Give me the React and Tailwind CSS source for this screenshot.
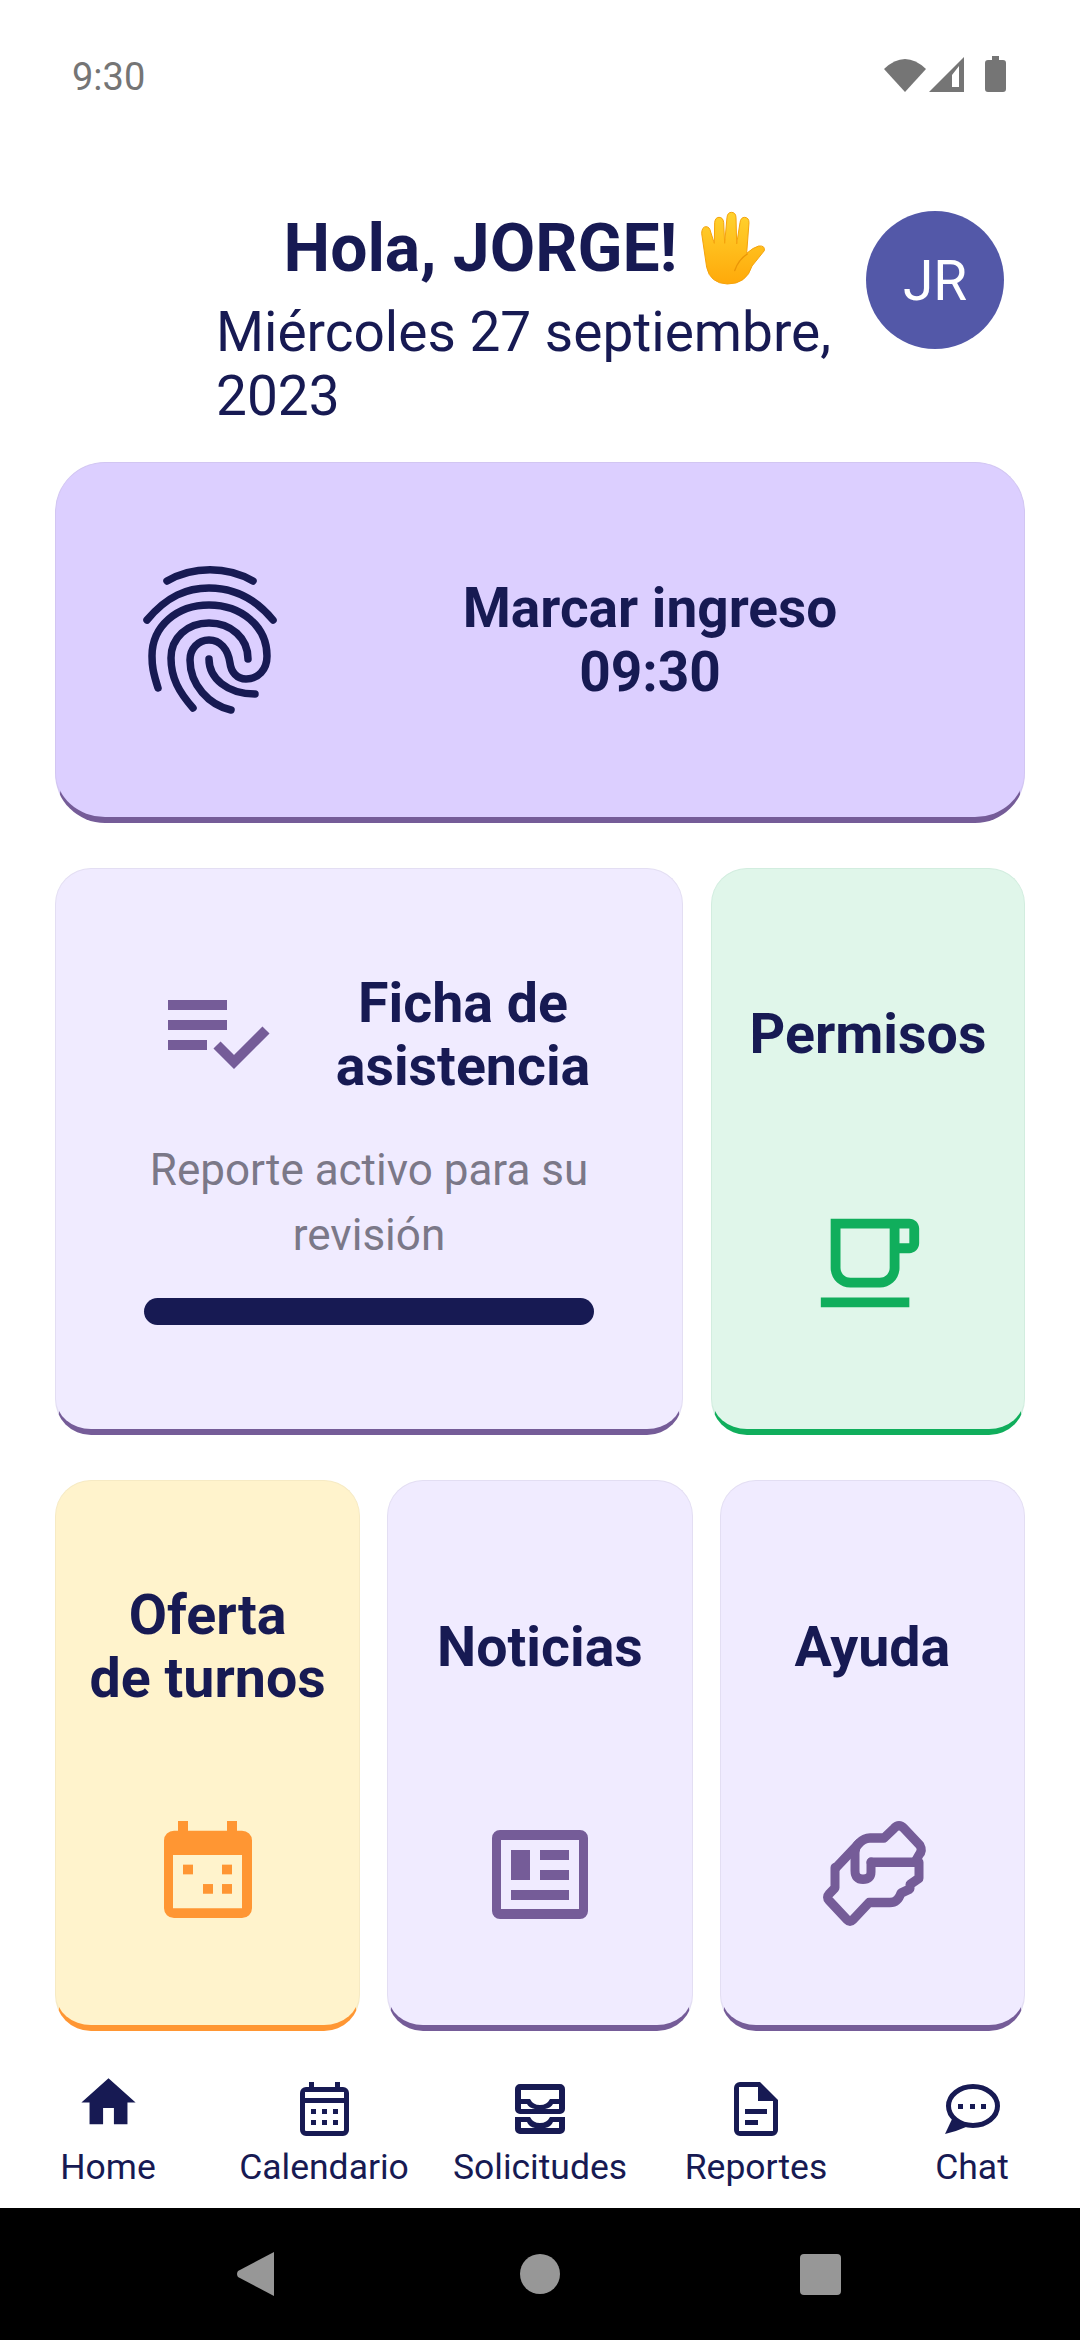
import { MdHome, MdOutlineLocalCafe } from "react-icons/md";

const navy = "#171a53";
const purple = "#755c98";

function HandEmoji() {
  return (
    <svg viewBox="0 0 270 270" className="w-[90px] h-[90px] shrink-0 -my-[1px]">
      <defs>
        <linearGradient id="hand" x1="0" y1="0" x2="0" y2="1">
          <stop offset="0" stopColor="#ffd22e" />
          <stop offset="1" stopColor="#ffa90a" />
        </linearGradient>
      </defs>
      <path
        d="M50 190 L35 88 Q36 68 48 68 Q59 68 62 84 L73 118 L74 55 Q76 40 87 40 Q99 40 101 55 L104 118 L111 40 Q113 25 124 25 Q137 25 138 40 L140 120 L150 56 Q152 40 164 40 Q177 41 177 56 L170 148 Q190 130 206 126 Q226 124 223 140 L186 186 Q170 240 112 240 Q60 238 50 190 Z"
        fill="url(#hand)"
        stroke="#f5a30c"
        strokeWidth="3"
        strokeLinejoin="round"
      />
      <path d="M172 150 Q146 166 134 200" fill="none" stroke="#eb9607" strokeWidth="4" strokeLinecap="round" />
    </svg>
  );
}

function Fingerprint() {
  return (
    <svg viewBox="0 0 170 170" className="w-[170px] h-[170px]" fill="none" stroke={navy} strokeWidth="7.5" strokeLinecap="round">
      <path d="M46 31 C72 16 106 16 132 31" />
      <path d="M26 70 C46 46 66 38 88 38 C112 38 134 48 152 70" />
      <path d="M37 138 C32 122 31 116 31 106 C31 76 56 55 88 55 C120 55 146 76 146 106 C146 120 137 129 125 129 C116 129 110 122 109 113 C107 99 99 90 88 90 C77 90 69 99 69 110 C69 135 88 155 110 160" />
      <path d="M72 158 C58 142 50 128 50 108 C50 88 66 73 88 73 C110 73 127 88 127 109" />
      <path d="M88 109 C88 128 106 144 134 144" />
    </svg>
  );
}

function ChecklistIcon() {
  return (
    <svg viewBox="0 0 102 70" className="w-[102px] h-[70px] shrink-0" fill={purple}>
      <rect x="0" y="0" width="59" height="10" />
      <rect x="0" y="20" width="59" height="10" />
      <rect x="0" y="40" width="39" height="10" />
      <path d="M49 45 L66 62 L98 30" fill="none" stroke={purple} strokeWidth="10" />
    </svg>
  );
}

function OrangeCalendar() {
  return (
    <svg viewBox="0 0 88 100" preserveAspectRatio="none" className="w-[88px] h-[97px] mb-[10px]">
      <path
        fillRule="evenodd"
        fill="#ff9633"
        d="M14 0h10v10h39V0h10v10h5a10 10 0 0 1 10 10v70a10 10 0 0 1-10 10H10A10 10 0 0 1 0 90V20a10 10 0 0 1 10-10h4zM9 35v55h69V35z"
      />
      <rect x="19" y="45" width="10" height="10" fill="#ff9633" />
      <rect x="58" y="45" width="10" height="10" fill="#ff9633" />
      <rect x="39" y="65" width="10" height="10" fill="#ff9633" />
      <rect x="58" y="65" width="10" height="10" fill="#ff9633" />
    </svg>
  );
}

function NewsIcon() {
  return (
    <svg viewBox="0 0 96 89" className="w-[96px] h-[89px]">
      <path
        fillRule="evenodd"
        fill={purple}
        d="M8 0h80a8 8 0 0 1 8 8v73a8 8 0 0 1-8 8H8a8 8 0 0 1-8-8V8a8 8 0 0 1 8-8zM9 10v69h78V10z"
      />
      <rect x="19" y="20" width="19" height="30" fill={purple} />
      <rect x="48" y="20" width="29" height="10" fill={purple} />
      <rect x="48" y="40" width="29" height="10" fill={purple} />
      <rect x="19" y="60" width="58" height="10" fill={purple} />
    </svg>
  );
}

function HandshakeIcon() {
  return (
    <svg viewBox="0 0 180 170" preserveAspectRatio="none" className="w-[180px] h-[180px] -my-[40px]" fill="none" stroke={purple} strokeWidth="9" strokeLinejoin="round" strokeLinecap="round">
      <path d="M54 79 L77 56 Q82 51 88 51 H102 L112 42 Q117 37 122 42 L138 58 Q141 63 137 67 L134 72" />
      <path d="M89 74 H137 V89 L128 95 V99 L119 103 Q116 112 108 112 H87 L71 128 Q68 131 65 128 L47 110 Q44 107 47 104 L53 98 V79" />
      <path d="M89 74 V83 Q89 90 81 90 Q73 90 73 82 V65 Q73 59 77 56" />
    </svg>
  );
}

function NavCalendar() {
  return (
    <svg viewBox="0 0 49 54" className="w-[49px] h-[54px]" fill={navy}>
      <path
        fillRule="evenodd"
        d="M9 0h5v5h21V0h5v5h3a6 6 0 0 1 6 6v37a6 6 0 0 1-6 6H6a6 6 0 0 1-6-6V11a6 6 0 0 1 6-6h3zM5 21v27a1 1 0 0 0 1 1h37a1 1 0 0 0 1-1V21zM5 10v6h39v-6z"
      />
      <rect x="11" y="27" width="5" height="5" />
      <rect x="22" y="27" width="5" height="5" />
      <rect x="33" y="27" width="5" height="5" />
      <rect x="11" y="38" width="5" height="5" />
      <rect x="22" y="38" width="5" height="5" />
      <rect x="33" y="38" width="5" height="5" />
    </svg>
  );
}

function NavInbox() {
  return (
    <svg viewBox="0 0 50 50" className="w-[50px] h-[50px]" fill={navy}>
      <path
        fillRule="evenodd"
        d="M5 0H45a5 5 0 0 1 5 5V25a5 5 0 0 1-5 5H5a5 5 0 0 1-5-5V5a5 5 0 0 1 5-5zM6 6V15H15Q18 21 25 21Q32 21 35 15H44V6zM6 20V25H20Q14 24 12 20zM44 20H38Q36 24 30 25H44z"
      />
      <path
        fillRule="evenodd"
        d="M0 33H15Q18 39 25 39Q32 39 35 33H50V45a5 5 0 0 1-5 5H5a5 5 0 0 1-5-5zM6 38V44H20Q14 43 12 38zM44 38H38Q36 43 30 44H44z"
      />
    </svg>
  );
}

function NavDoc() {
  return (
    <svg viewBox="0 0 44 54" className="w-[44px] h-[54px]" fill={navy}>
      <path
        fillRule="evenodd"
        d="M6 0h20l18 18v30a6 6 0 0 1-6 6H6a6 6 0 0 1-6-6V6a6 6 0 0 1 6-6zM5 5v44h34V19H24V5z"
      />
      <rect x="11" y="27" width="22" height="5" />
      <rect x="11" y="38" width="13" height="5" />
    </svg>
  );
}

function NavChat() {
  return (
    <svg viewBox="0 0 55 50" className="w-[55px] h-[50px]">
      <ellipse cx="28" cy="22" rx="24.5" ry="19.5" fill="none" stroke={navy} strokeWidth="5" />
      <path d="M0 50 L8 33 L21 43 Q10 48 0 50 Z" fill={navy} />
      <rect x="13" y="20" width="5" height="5" fill={navy} />
      <rect x="25" y="20" width="5" height="5" fill={navy} />
      <rect x="36" y="20" width="5" height="5" fill={navy} />
    </svg>
  );
}

const navItems = [
  { label: "Home", icon: <MdHome className="w-[65px] h-[65px] -mt-[12px] mb-[2px]" color={navy} /> },
  { label: "Calendario", icon: <NavCalendar /> },
  { label: "Solicitudes", icon: <NavInbox /> },
  { label: "Reportes", icon: <NavDoc /> },
  { label: "Chat", icon: <NavChat /> },
];

export default function App() {
  return (
    <div className="w-[1080px] h-[2340px] bg-white flex flex-col overflow-hidden text-[#171a53] font-['Roboto',sans-serif]">
      {/* status bar */}
      <div className="h-[154px] flex justify-between items-start pt-[52px] pl-[72px] pr-[74px] shrink-0">
        <span className="text-[38px] leading-[50px] text-[#757575]">9:30</span>
        <div className="flex items-center gap-[3px] mt-[4px]">
          <svg viewBox="0 0 42 35" className="w-[42px] h-[35px]" fill="#757575">
            <path d="M21 35 L0 12 Q21 -8 42 12 Z" />
          </svg>
          <svg viewBox="0 0 36 35" className="w-[36px] h-[35px]" fill="#757575">
            <path fillRule="evenodd" d="M35 0V35H0zM30 9L23 18V30H30z" />
          </svg>
          <svg viewBox="0 0 21 36" className="w-[21px] h-[36px] ml-[17px]" fill="#757575">
            <path d="M7 0h7v4h4a3 3 0 0 1 3 3v26a3 3 0 0 1-3 3H3a3 3 0 0 1-3-3V7a3 3 0 0 1 3-3h4z" />
          </svg>
        </div>
      </div>

      {/* header */}
      <div className="h-[308px] shrink-0 flex items-start pl-[216px]">
        <div className="w-[620px] pt-[51px]">
          <div className="flex justify-center items-center gap-[13px] h-[88px] pl-[12px]">
            <span className="text-[66px] font-bold leading-[88px]">Hola, JORGE!</span>
            <HandEmoji />
          </div>
          <p className="text-[55px] leading-[64px] mt-[7px]">Miércoles 27 septiembre, 2023</p>
        </div>
        <div className="ml-[30px] mt-[57px] w-[138px] h-[138px] rounded-full bg-[#5358a8] text-white text-[55px] pt-[2px] flex items-center justify-center shrink-0">
          JR
        </div>
      </div>

      <div className="flex-1 flex flex-col px-[55px] gap-[45px]">
        {/* clock in */}
        <div className="h-[361px] rounded-[50px] bg-[#dccfff] border border-[#d2c6f2] border-b-[6px] border-b-[#755c98] flex items-center shrink-0">
          <div className="w-[280px] flex justify-center -mr-[10px] pl-[19px]">
            <div className="mb-[10px]">
              <Fingerprint />
            </div>
          </div>
          <div className="flex-1 text-center text-[55px] font-bold leading-[64px] pr-[50px]">
            <div>Marcar ingreso</div>
            <div>09:30</div>
          </div>
        </div>

        {/* ficha + permisos */}
        <div className="flex gap-[28px] h-[567px] shrink-0">
          <div className="w-[628px] rounded-[36px] bg-[#f0ebff] border border-[#e3def3] border-b-[6px] border-b-[#755c98] flex flex-col items-center pt-[103px]">
            <div className="flex items-center w-full pl-[112px]">
              <ChecklistIcon />
              <div className="w-[300px] ml-[43px] text-center text-[55.5px] font-bold leading-[63px]">
                Ficha de asistencia
              </div>
            </div>
            <p className="w-[500px] text-center text-[44px] leading-[65px] text-[#7b7888] mt-[40px]">
              Reporte activo para su revisión
            </p>
            <div className="w-[450px] h-[27px] rounded-full bg-[#171a53] mt-[30px]" />
          </div>
          <div className="flex-1 rounded-[36px] bg-[#e0f6ea] border border-[#d2eddf] border-b-[6px] border-b-[#10ae5c] flex flex-col items-center pt-[134px]">
            <div className="text-[55.5px] font-bold leading-[63px]">Permisos</div>
            <MdOutlineLocalCafe className="w-[132px] h-[118px] mt-[138px] ml-[4px]" color="#10ae5c" />
          </div>
        </div>

        {/* bottom cards */}
        <div className="grid grid-cols-3 gap-[27px] h-[551px] shrink-0">
          <Tile label={["Oferta", "de turnos"]} tone="yellow" icon={<OrangeCalendar />} />
          <Tile label={["Noticias"]} tone="purple" icon={<NewsIcon />} />
          <Tile label={["Ayuda"]} tone="purple" icon={<HandshakeIcon />} />
        </div>
      </div>

      {/* bottom nav */}
      <div className="h-[177px] shrink-0 grid grid-cols-5">
        {navItems.map((item) => (
          <div key={item.label} className="flex flex-col items-center">
            <div className="h-[60px] mt-[48px] flex items-center justify-center">{item.icon}</div>
            <span className="text-[35.5px] leading-[44px] mt-[6px]">{item.label}</span>
          </div>
        ))}
      </div>

      {/* android nav */}
      <div className="h-[132px] bg-black flex items-center shrink-0 pl-[236px]">
        <svg viewBox="0 0 40 46" className="w-[40px] h-[46px]" fill="#979797">
          <path d="M38 1 V45 L2 26 Q0 23 2 20 Z" />
        </svg>
        <div className="w-[40px] h-[40px] ml-[244px] rounded-full bg-[#979797]" />
        <div className="w-[41px] h-[41px] ml-[240px] rounded-[4px] bg-[#979797]" />
      </div>
    </div>
  );
}

function Tile({ label, tone, icon }) {
  const toneClass =
    tone === "yellow"
      ? "bg-[#fff3cc] border-[#f6eac4] border-b-[#ff9633]"
      : "bg-[#f0ebff] border-[#e3def3] border-b-[#755c98]";
  return (
    <div className={`rounded-[36px] border border-b-[6px] flex flex-col items-center ${toneClass}`}>
      <div className="h-[240px] mt-[103px] w-full text-center text-[55.5px] font-bold leading-[63px] flex flex-col">
        {label.length === 1 ? <div className="mt-[32px]">{label[0]}</div> : label.map((l) => <div key={l}>{l}</div>)}
      </div>
      <div className="h-[100px] flex items-center justify-center">{icon}</div>
    </div>
  );
}
